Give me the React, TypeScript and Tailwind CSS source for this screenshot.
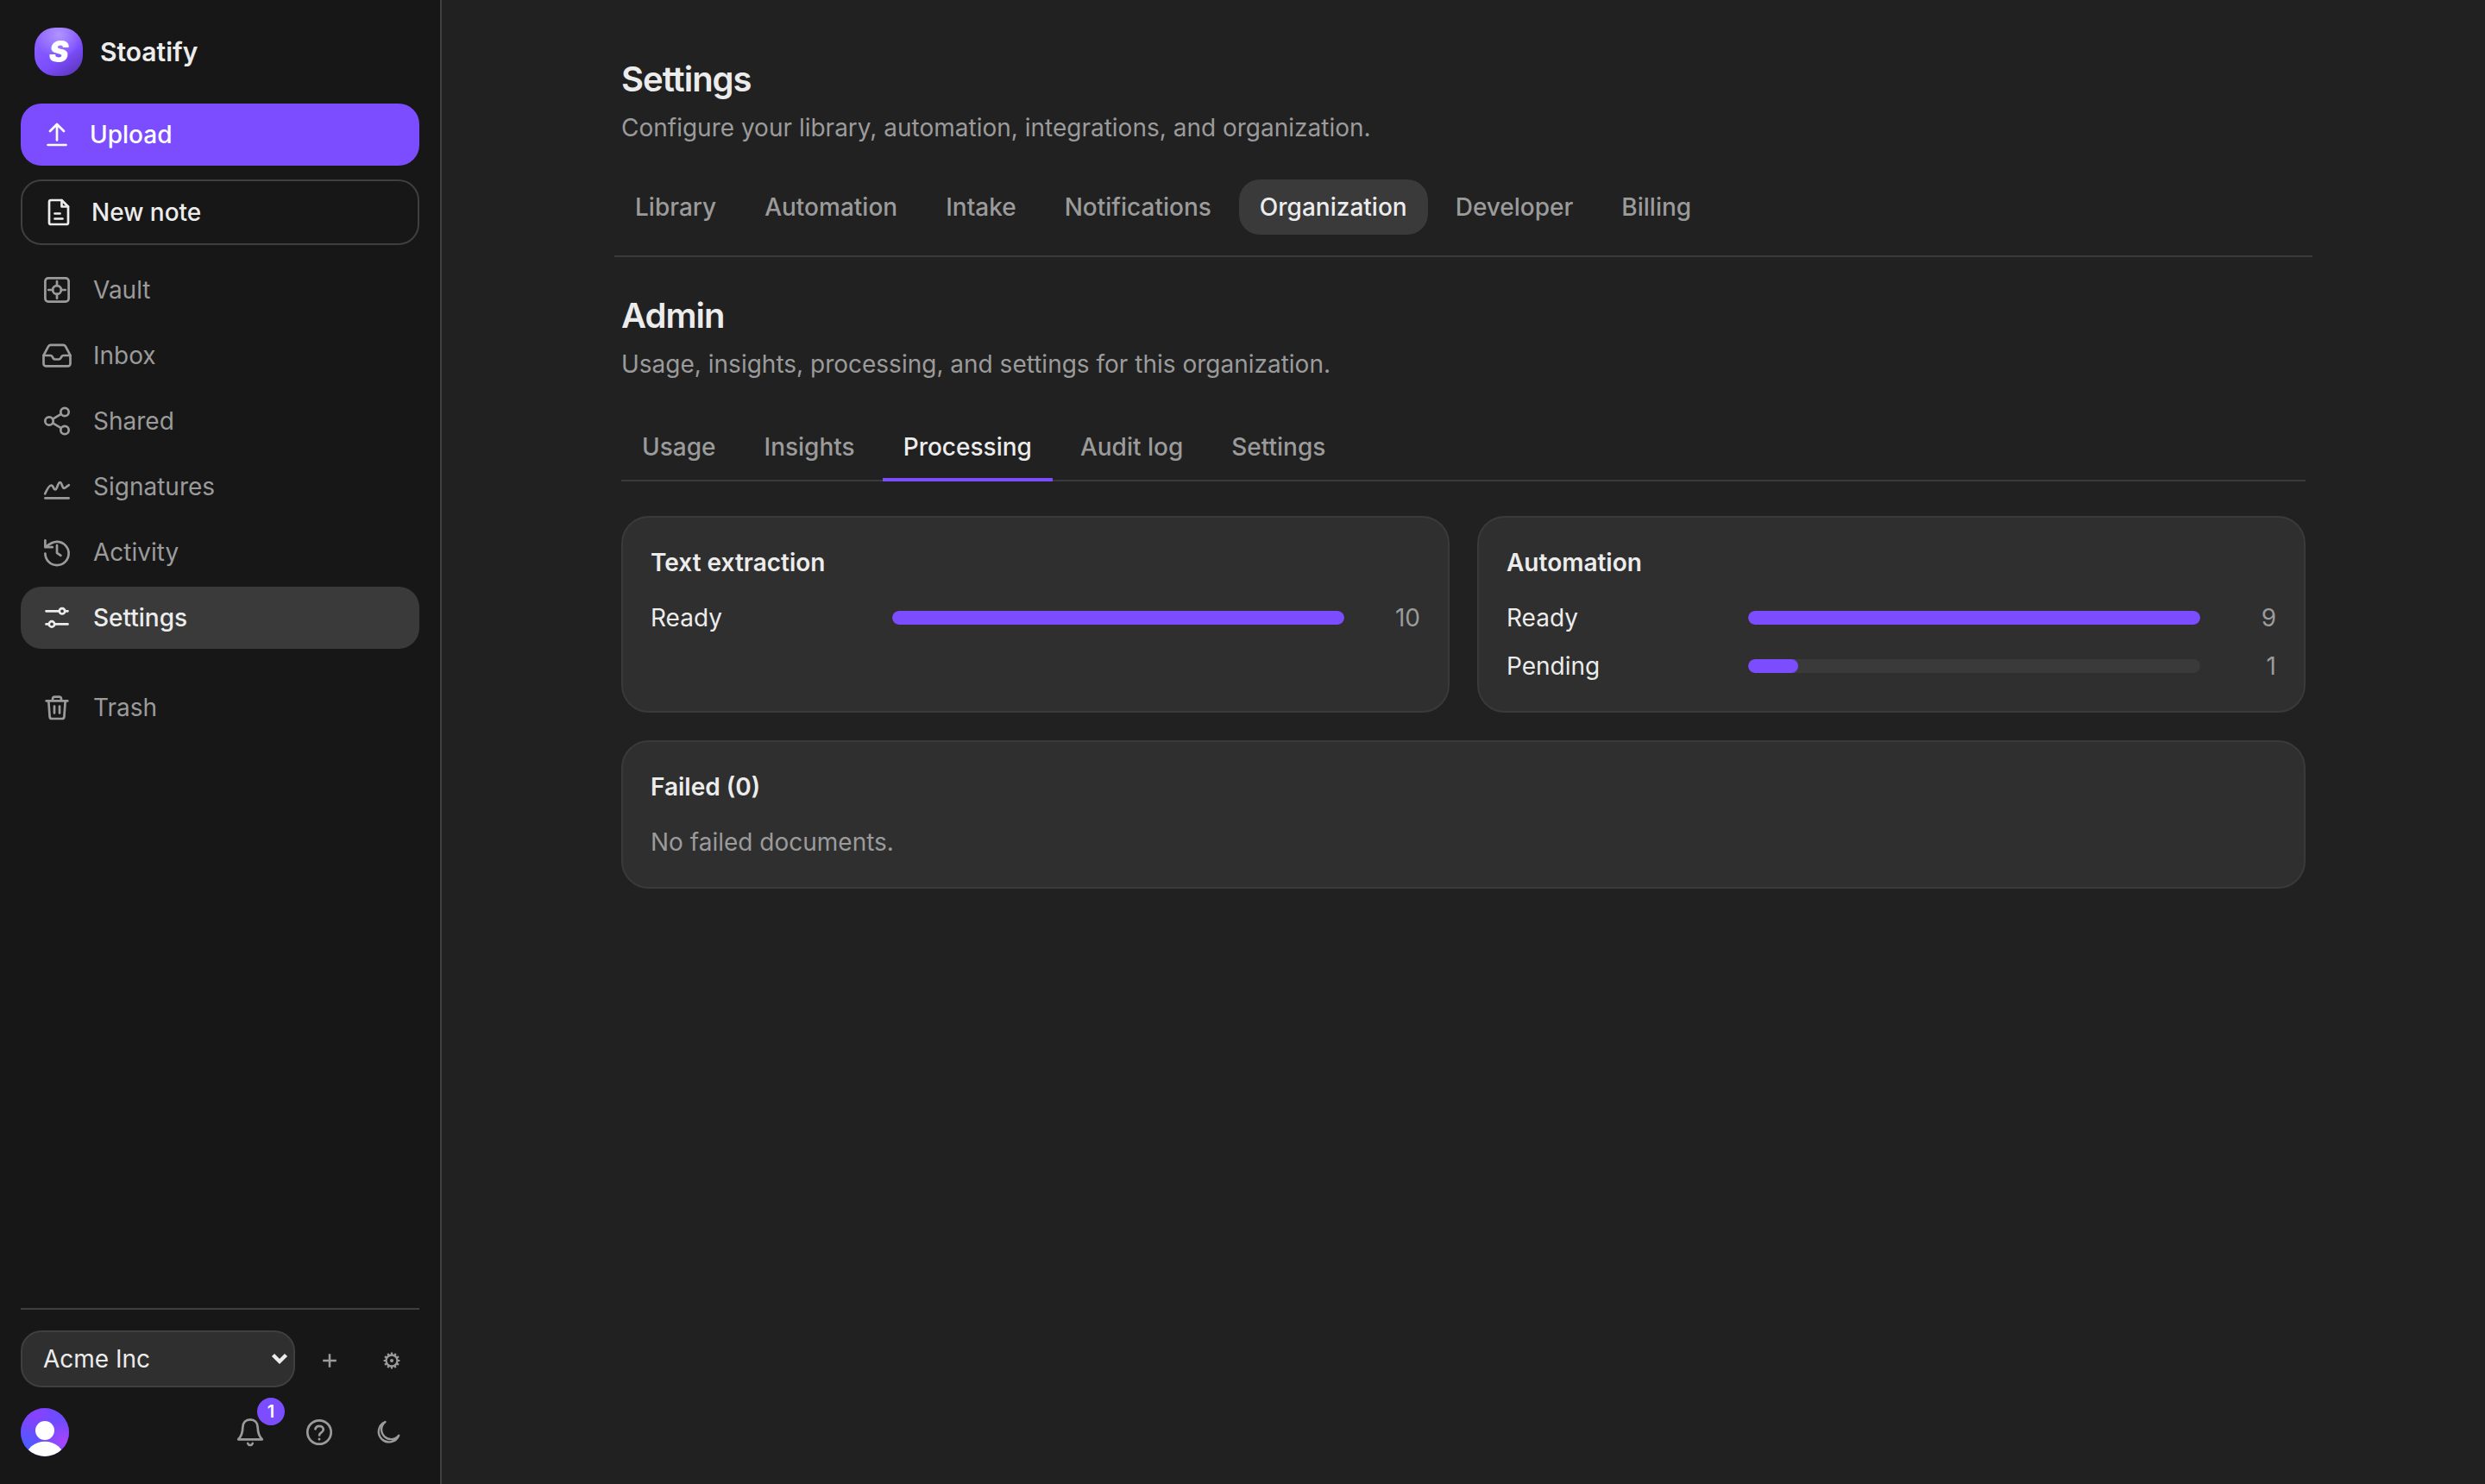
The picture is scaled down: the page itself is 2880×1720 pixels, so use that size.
import { useState } from "react";
import type { ReactNode } from "react";
import clsx from "clsx";

type IconName =
  | "upload"
  | "note"
  | "vault"
  | "inbox"
  | "shared"
  | "signatures"
  | "activity"
  | "settings"
  | "trash"
  | "bell"
  | "help"
  | "moon"
  | "plus"
  | "gear";

const icons: Record<IconName, ReactNode> = {
  upload: <path d="M18 24.5V6M10 14l8-8 8 8M7.5 30h21" />,
  note: (
    <>
      <path d="M21.5 4H9a2 2 0 0 0-2 2v24a2 2 0 0 0 2 2h18a2 2 0 0 0 2-2V11.5L21.5 4Z" />
      <path d="M21.5 4v7.5H29M13.5 19.5h6M13.5 25.5h9" />
    </>
  ),
  vault: (
    <>
      <rect x="4.4" y="4.4" width="27.2" height="27.2" rx="3.6" />
      <circle cx="18" cy="18" r="4.9" />
      <path d="M18 8.2v4.9M18 22.9v4.9M8.2 18h4.9M22.9 18h4.9" />
    </>
  ),
  inbox: (
    <>
      <path d="M2.5 18h8c1 0 1.6.4 2.1 1.3l1.1 1.9c.5.9 1.1 1.3 2.1 1.3h4.4c1 0 1.6-.4 2.1-1.3l1.1-1.9c.5-.9 1.1-1.3 2.1-1.3h8" />
      <path d="M2.5 17.8 8.1 7.4c.7-1.2 1.5-1.6 2.7-1.6h14.4c1.2 0 2 .4 2.7 1.6l5.6 10.4v9.6a3 3 0 0 1-3 3h-25a3 3 0 0 1-3-3Z" />
    </>
  ),
  shared: (
    <>
      <circle cx="9" cy="18" r="4.7" />
      <circle cx="27" cy="7.5" r="4.7" />
      <circle cx="27" cy="28.5" r="4.7" />
      <path d="m13.2 15.6 9.6-5.7M13.2 20.4l9.6 5.7" />
    </>
  ),
  signatures: (
    <path d="M4.2 26.3c2-4.5 4.3-9.6 7.2-9.8 2.6-.1 2.4 5 4.6 5 2.3 0 2.9-8.4 5.5-8.4 2.5 0 2.3 6.7 4.7 6.7 2.2 0 3.6-2.6 5.6-3.6M4.4 31.4h27.2" />
  ),
  activity: (
    <>
      <path d="M4.4 19.5A13.6 13.6 0 1 0 18 5.9c-4.6 0-8.6 2.4-13.1 6" />
      <path d="M4.4 4.3v7.9h8.4M18 10.2v8.6l4.4 3" />
    </>
  ),
  settings: (
    <>
      <path d="M5.5 10.3h15M27.5 10.3h3M5.5 25.4h3M15.5 25.4h15" />
      <circle cx="24" cy="10.3" r="3.2" />
      <circle cx="12" cy="25.4" r="3.2" />
    </>
  ),
  trash: (
    <>
      <path d="M5.7 10.4h24.6M13 10.4V8.2a2.5 2.5 0 0 1 2.5-2.5h5A2.5 2.5 0 0 1 23 8.2v2.2" />
      <path d="m8.3 10.4 1.3 18.2a2.5 2.5 0 0 0 2.5 2.4h11.8a2.5 2.5 0 0 0 2.5-2.4l1.3-18.2M15 16.5v8M21 16.5v8" />
    </>
  ),
  bell: (
    <>
      <path d="M4.2 26.3c3.3-3.3 5-8 5.1-13.8C9.4 6.8 13 3.4 18 3.4s8.6 3.4 8.7 9.1c.1 5.8 1.8 10.5 5.1 13.8Z" />
      <path d="M15.2 31c.6 1.4 1.6 2 2.8 2s2.200-.6 2.800-2" />
    </>
  ),
  help: (
    <>
      <circle cx="18" cy="18" r="13.7" />
      <path d="M13.4 14.3a4.7 4.7 0 0 1 4.7-3.5c2.8 0 4.7 1.7 4.7 4 0 2-1.3 3-2.7 3.9-1.3.8-2 1.5-2 2.8" />
      <circle cx="18" cy="26" r="1.5" fill="currentColor" stroke="none" />
    </>
  ),
  moon: <path d="M14.5 6A12.1 12.1 0 1 0 30.2 21.7 11.2 11.2 0 1 1 14.5 6Z" strokeWidth="2.4" />,
  plus: <path d="M18 10.2v15.6M10.2 18h15.6" strokeWidth="2.5" strokeLinecap="butt" />,
  gear: (
    <>
      <circle cx="18" cy="18" r="6.5" strokeWidth="2.3" />
      <circle cx="18" cy="18" r="2" fill="currentColor" stroke="none" />
      <path
        d="M18 8.6v3M18 24.4v3M8.6 18h3M24.4 18h3M13.3 9.9l1.5 2.5M21.2 23.6l1.5 2.5M9.9 13.3l2.5 1.5M23.6 21.2l2.5 1.5M9.9 22.7l2.5-1.5M23.6 14.8l2.5-1.5M13.3 26.1l1.5-2.5M21.2 12.4l1.5-2.5"
        strokeWidth="2.2"
        strokeLinecap="butt"
      />
    </>
  ),
};

const Icon = ({ name }: { name: IconName }) => (
  <svg
    className="size-9 shrink-0"
    viewBox="0 0 36 36"
    fill="none"
    stroke="currentColor"
    strokeWidth="2.7"
    strokeLinecap="round"
    strokeLinejoin="round"
    aria-hidden="true"
  >
    {icons[name]}
  </svg>
);

const navItems: { label: string; icon: IconName }[] = [
  { label: "Vault", icon: "vault" },
  { label: "Inbox", icon: "inbox" },
  { label: "Shared", icon: "shared" },
  { label: "Signatures", icon: "signatures" },
  { label: "Activity", icon: "activity" },
  { label: "Settings", icon: "settings" },
];

const settingsTabs = ["Library", "Automation", "Intake", "Notifications", "Organization", "Developer", "Billing"];
const adminTabs = ["Usage", "Insights", "Processing", "Audit log", "Settings"];

const NavLink = ({ label, icon, active }: { label: string; icon: IconName; active?: boolean }) => (
  <a
    href="#"
    aria-current={active ? "page" : undefined}
    className={clsx(
      "flex h-18 items-center gap-6 rounded-3xl px-6",
      active ? "bg-[#3a3a3a] font-medium text-[#ececec]" : "text-[#9b9b9b]"
    )}
  >
    <Icon name={icon} />
    {label}
  </a>
);

const Avatar = () => (
  <svg className="size-14" viewBox="0 0 56 56" aria-hidden="true">
    <defs>
      <radialGradient id="avatar-top" cx="0.3" cy="0.1" r="0.4">
        <stop offset="0" stopColor="#8a40ff" />
        <stop offset="1" stopColor="#8a40ff" stopOpacity="0" />
      </radialGradient>
      <radialGradient id="avatar-right" cx="0.9" cy="0.7" r="0.45">
        <stop offset="0" stopColor="#a845ff" />
        <stop offset="1" stopColor="#a845ff" stopOpacity="0" />
      </radialGradient>
      <radialGradient id="avatar-left" cx="0.1" cy="0.85" r="0.5">
        <stop offset="0" stopColor="#4a5cff" />
        <stop offset="1" stopColor="#4a5cff" stopOpacity="0" />
      </radialGradient>
      <clipPath id="avatar-clip">
        <circle cx="28" cy="28" r="28" />
      </clipPath>
    </defs>
    <g clipPath="url(#avatar-clip)">
      <rect width="56" height="56" fill="#6f4bff" />
      <rect width="56" height="56" fill="url(#avatar-top)" />
      <rect width="56" height="56" fill="url(#avatar-right)" />
      <rect width="56" height="56" fill="url(#avatar-left)" />
      <circle cx="28" cy="26" r="11" fill="#fff" />
      <ellipse cx="28" cy="58" rx="22" ry="19.3" fill="#fff" />
    </g>
  </svg>
);

const Sidebar = () => (
  <aside className="sticky top-0 flex h-screen w-128 shrink-0 flex-col border-r-2 border-[#3f3f3f] bg-[#171717] p-6">
    <div className="mt-2 flex h-14 items-center gap-5 px-4">
      <div className="flex size-14 items-center justify-center rounded-3xl bg-[radial-gradient(circle_at_50%_15%,#b094ff_0%,transparent_50%),linear-gradient(145deg,#8a5fff_20%,#7c4dff_60%,#5a35b5_95%)]">
        <span className="text-[34px] leading-none font-black text-white italic">S</span>
      </div>
      <span className="text-[30px] leading-10 font-semibold">Stoatify</span>
    </div>

    <button className="mt-8 flex h-18 items-center gap-5 rounded-3xl bg-[#7c4dff] px-6 font-medium text-white">
      <Icon name="upload" />
      Upload
    </button>
    <button className="mt-4 flex h-19 items-center gap-5 rounded-3xl border-2 border-[#3f3f3f] px-6 font-medium">
      <Icon name="note" />
      New note
    </button>

    <nav className="mt-4 flex flex-col gap-1">
      {navItems.map((item) => (
        <NavLink key={item.label} {...item} active={item.label === "Settings"} />
      ))}
      <div className="mt-7">
        <NavLink label="Trash" icon="trash" />
      </div>
    </nav>

    <div className="mt-auto border-t-2 border-[#3f3f3f] pt-6 text-[#9b9b9b]">
      <div className="flex items-center gap-2">
        <div className="relative flex-1">
          <select
            aria-label="Organization"
            className="h-[66px] w-full appearance-none rounded-3xl border-2 border-[#3f3f3f] bg-[#2f2f2f] px-6 text-[#ececec]"
          >
            <option>Acme Inc</option>
          </select>
          <svg
            className="pointer-events-none absolute top-6 right-2 h-4 w-5"
            viewBox="0 0 20 16"
            fill="none"
            stroke="#ececec"
            strokeWidth="4.4"
            aria-hidden="true"
          >
            <path d="m2.5 4.5 7.5 7.5 7.5-7.5" />
          </svg>
        </div>
        <button aria-label="New organization" className="flex size-16 items-center justify-center pt-1">
          <Icon name="plus" />
        </button>
        <button aria-label="Organization settings" className="flex size-16 items-center justify-center pt-1">
          <Icon name="gear" />
        </button>
      </div>

      <div className="mt-4 flex h-18 items-center gap-2">
        <button aria-label="Account" className="mr-auto">
          <Avatar />
        </button>
        <button aria-label="Notifications" className="relative flex size-18 items-center justify-center">
          <Icon name="bell" />
          <span className="absolute -top-1 -right-1 flex size-8 items-center justify-center rounded-full bg-[#7c4dff] text-xl leading-none font-semibold text-white">
            1
          </span>
        </button>
        <button aria-label="Help" className="flex size-18 items-center justify-center">
          <Icon name="help" />
        </button>
        <button aria-label="Toggle theme" className="flex size-18 items-center justify-center">
          <Icon name="moon" />
        </button>
      </div>
    </div>
  </aside>
);

const PageTitle = ({ title, description }: { title: string; description: string }) => (
  <header>
    <h2 className="text-[40px] leading-14 font-semibold tracking-tight [font-variation-settings:'opsz'_20]">{title}</h2>
    <p className="mt-2 text-[#9b9b9b]">{description}</p>
  </header>
);

const Card = ({ title, children }: { title: string; children: ReactNode }) => (
  <section className="h-full rounded-4xl border-2 border-[#3a3a3a] bg-[#2f2f2f] p-8">
    <h3 className="mb-6 font-semibold">{title}</h3>
    {children}
  </section>
);

const StatusBars = ({ rows }: { rows: { label: string; count: number }[] }) => {
  const max = Math.max(...rows.map((row) => row.count));

  return (
    <div className="flex flex-col gap-4">
      {rows.map((row) => (
        <div key={row.label} className="grid grid-cols-[256px_1fr_64px] items-center gap-6">
          <span>{row.label}</span>
          <div className="h-4 overflow-hidden rounded-full bg-[#3a3a3a]">
            <div className="h-full rounded-full bg-[#7c4dff]" style={{ width: `${(row.count / max) * 100}%` }} />
          </div>
          <span className="text-right text-[#9b9b9b]">{row.count}</span>
        </div>
      ))}
    </div>
  );
};

const App = () => {
  const [section, setSection] = useState("Organization");
  const [adminTab, setAdminTab] = useState("Processing");

  return (
    <div className="flex min-h-screen bg-[#212121] font-['Inter',sans-serif] text-[28px] leading-10 text-[#ececec] [font-optical-sizing:none]">
      <Sidebar />

      <main className="min-w-0 flex-1 px-10 py-16">
        <div className="mx-auto max-w-[1952px]">
          <PageTitle title="Settings" description="Configure your library, automation, integrations, and organization." />

          <div role="tablist" className="-mx-2 mt-10 flex gap-2 border-b-2 border-[#3a3a3a] pb-6">
            {settingsTabs.map((tab) => (
              <button
                key={tab}
                role="tab"
                aria-selected={tab === section}
                onClick={() => setSection(tab)}
                className={clsx(
                  "h-16 rounded-3xl px-6 font-medium",
                  tab === section ? "bg-[#3a3a3a] text-[#ececec]" : "text-[#9b9b9b]"
                )}
              >
                {tab}
              </button>
            ))}
          </div>

          <div className="mt-10">
            <PageTitle title="Admin" description="Usage, insights, processing, and settings for this organization." />
          </div>

          <div role="tablist" className="mt-10 flex gap-2 border-b-2 border-[#3a3a3a]">
            {adminTabs.map((tab) => (
              <button
                key={tab}
                role="tab"
                aria-selected={tab === adminTab}
                onClick={() => setAdminTab(tab)}
                className={clsx(
                  "-mb-0.5 border-b-4 px-6 py-4 font-medium",
                  tab === adminTab ? "border-[#7c4dff] text-[#ececec]" : "border-transparent text-[#9b9b9b]"
                )}
              >
                {tab}
              </button>
            ))}
          </div>

          <div className="mt-10 grid grid-cols-2 gap-8">
            <Card title="Text extraction">
              <StatusBars rows={[{ label: "Ready", count: 10 }]} />
            </Card>
            <Card title="Automation">
              <StatusBars
                rows={[
                  { label: "Ready", count: 9 },
                  { label: "Pending", count: 1 },
                ]}
              />
            </Card>
            <div className="col-span-2">
              <Card title="Failed (0)">
                <p className="text-[#9b9b9b]">No failed documents.</p>
              </Card>
            </div>
          </div>
        </div>
      </main>
    </div>
  );
};

export default App;
